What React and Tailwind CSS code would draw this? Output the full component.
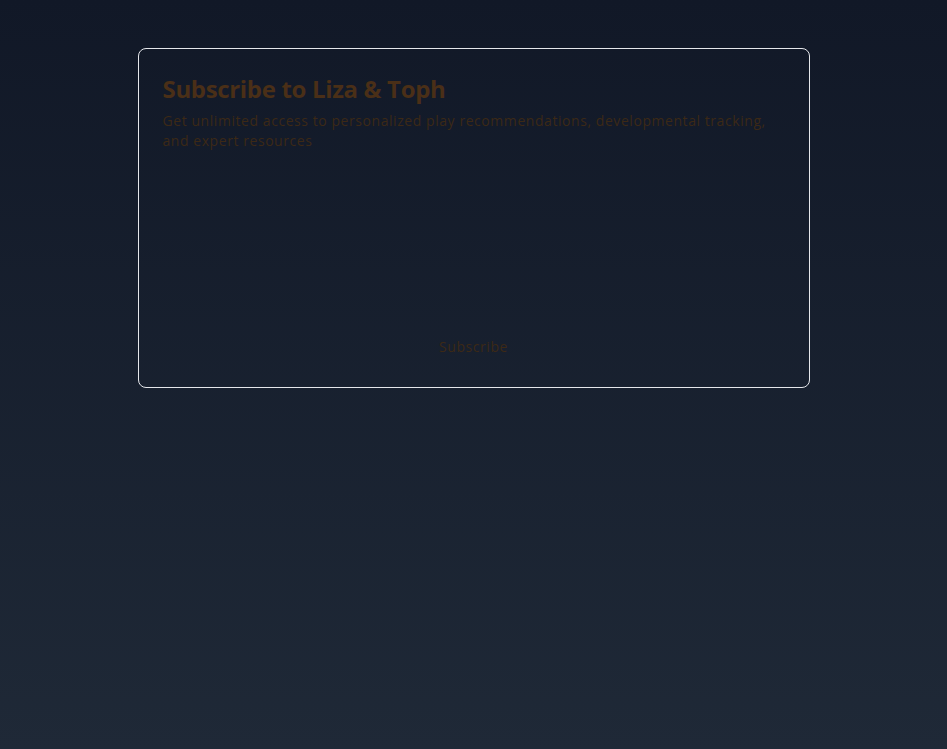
export default function App() {
  return (
    <div className="min-h-screen w-full bg-gradient-to-b from-[#111827] to-[#1f2937] px-4 py-12" style={{ fontFamily: '"Open Sans", "Liberation Sans", sans-serif' }}>
      <div className="mx-auto flex h-[340px] max-w-2xl flex-col rounded-lg border border-[#e5e7eb] p-6">
        <h2 className="text-2xl font-bold leading-8 tracking-[-0.014em] text-[#4a2f17]">Subscribe to Liza &amp; Toph</h2>
        <p className="mt-1.5 text-sm leading-5 tracking-[0.04em] text-[#3c2916]">
          Get unlimited access to personalized play recommendations, developmental tracking, and expert resources
        </p>
        <div className="flex-1" />
        <button type="button" className="h-8 w-full text-center text-sm tracking-[0.04em] text-[#3c2916]">
          Subscribe
        </button>
      </div>
    </div>
  )
}
